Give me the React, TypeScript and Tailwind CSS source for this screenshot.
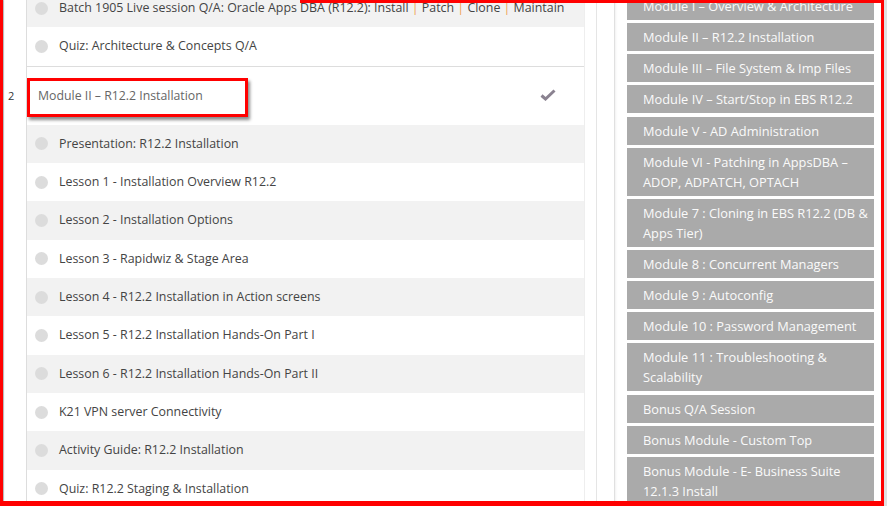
import React from "react";

const lessons = [
  "Presentation: R12.2 Installation",
  "Lesson 1 - Installation Overview R12.2",
  "Lesson 2 - Installation Options",
  "Lesson 3 - Rapidwiz & Stage Area",
  "Lesson 4 - R12.2 Installation in Action screens",
  "Lesson 5 - R12.2 Installation Hands-On Part I",
  "Lesson 6 - R12.2 Installation Hands-On Part II",
  "K21 VPN server Connectivity",
  "Activity Guide: R12.2 Installation",
  "Quiz: R12.2 Staging & Installation",
];

const modules: string[] = [
  "Module I – Overview & Architecture",
  "Module II – R12.2 Installation",
  "Module III – File System & Imp Files",
  "Module IV – Start/Stop in EBS R12.2",
  "Module V - AD Administration",
  "Module VI - Patching in AppsDBA – ADOP, ADPATCH, OPTACH",
  "Module 7 : Cloning in EBS R12.2 (DB & Apps Tier)",
  "Module 8 : Concurrent Managers",
  "Module 9 : Autoconfig",
  "Module 10 : Password Management",
  "Module 11 : Troubleshooting & Scalability",
  "Bonus Q/A Session",
  "Bonus Module - Custom Top",
  "Bonus Module - E- Business Suite 12.1.3 Install",
];

function Dot() {
  return <span className="w-[13px] h-[13px] rounded-full bg-[#dcdcdc] shrink-0" />;
}

function Row({ gray, children }: { gray: boolean; children: React.ReactNode }) {
  return (
    <div
      className={`h-[38.33px] flex items-center pl-[8px] gap-[11px] text-[12.4px] text-[#444] whitespace-nowrap ${
        gray ? "bg-[#f2f2f2]" : "bg-white"
      }`}
    >
      <Dot />
      <span>{children}</span>
    </div>
  );
}

export default function App() {
  const pipe = <span className="text-[#f0a050]"> | </span>;
  return (
    <div
      className="relative w-[887px] h-[506px] overflow-hidden bg-white flex"
      style={{ fontFamily: "'Open Sans', 'Noto Sans', sans-serif" }}
    >
      {/* Curriculum table */}
      <div className="flex flex-col -mt-[11px] w-[585px] shrink-0">
        {/* section 1 tail */}
        <div className="flex">
          <div className="w-[27px] border-r border-[#dddddd] shrink-0" />
          <div className="w-[558px] border-r border-[#eeeeee]">
            <Row gray>
              Batch 1905 Live session Q/A: Oracle Apps DBA (R12.2): Install{pipe}Patch{pipe}Clone{pipe}Maintain
            </Row>
            <div className="border-b border-[#dddddd]">
              <div className="h-[38.5px] flex items-center pl-[8px] gap-[11px] text-[12.4px] text-[#444] bg-white">
                <Dot />
                <span>Quiz: Architecture &amp; Concepts Q/A</span>
              </div>
            </div>
          </div>
        </div>
        {/* section 2 */}
        <div className="flex">
          <div className="w-[27px] border-r border-[#dddddd] shrink-0 pl-[8px] pt-[21px] text-[11px] text-[#333]">
            2
          </div>
          <div className="w-[558px] border-r border-[#eeeeee]">
            <div className="relative h-[58px] flex items-center justify-between pl-[11px] pr-[28px] bg-white">
              <span className="text-[12.3px] text-[#666] mt-[1px]">Module II – R12.2 Installation</span>
              <svg width="16" height="12" viewBox="0 0 16 12" className="-mt-[1px]">
                <path d="M1.5 6.5 L5.5 10 L14.5 1.5" fill="none" stroke="#8a8290" strokeWidth="3" strokeLinejoin="miter" />
              </svg>
              <div className="absolute left-0 top-[11px] w-[221px] h-[39px] border-[3px] border-[#ff0000] shadow-[2px_3px_3px_rgba(0,0,0,0.45)]" />
            </div>
            {lessons.map((l, i) => (
              <Row key={l} gray={i % 2 === 0}>
                {l}
              </Row>
            ))}
          </div>
        </div>
      </div>

      {/* gutter */}
      <div className="w-[12px] border-r border-[#e6e6e6] shrink-0" />
      <div className="w-[18px] border-r border-[#e0e0e0] shrink-0 shadow-[1px_0_2px_rgba(0,0,0,0.06)]" />

      {/* sidebar */}
      <div className="pl-[12px] -mt-[8px] flex flex-col gap-[3.15px] w-[259px] shrink-0">
        {modules.map((m) => (
          <div
            key={m}
            className="bg-[#aaaaaa] text-[#fafafa] text-[12.8px] leading-[20px] pl-[16px] pr-[3px] py-[4px]"
          >
            {m}
          </div>
        ))}
      </div>

      {/* red annotation frame */}
      <div className="absolute left-0 top-0 bottom-0 w-[3px] bg-[#ff0000] shadow-[1px_0_1px_rgba(0,0,0,0.3)]" />
      <div className="absolute left-[300px] top-0 w-[584px] h-[3px] bg-[#ff0000]" />
      <div className="absolute left-[881px] top-0 bottom-0 w-[3px] bg-[#ff0000] shadow-[1px_0_2px_rgba(0,0,0,0.35)]" />
      <div className="absolute left-0 right-0 bottom-0 h-[5px] bg-[#ff0000]" />
      <div className="absolute left-[884px] top-0 bottom-0 w-[3px] bg-[#e0e0e0]" />
    </div>
  );
}
